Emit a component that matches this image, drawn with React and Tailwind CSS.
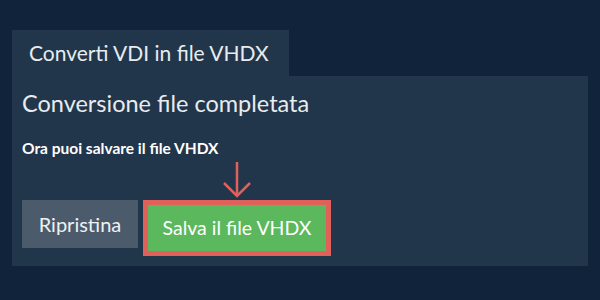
import React from "react";

export default function App() {
  return (
    <div className="w-[600px] h-[300px] bg-[#10233a] pt-[30px] px-[12px] font-['Lato',sans-serif] overflow-hidden">
      <div className="inline-flex items-center h-[46px] w-[277px] bg-[#22364b] pl-[17px] text-[21px] text-[#e8ecef]">
        Converti VDI in file VHDX
      </div>
      <div className="bg-[#22364b] h-[190px] px-[10px] pt-[12px]">
        <h1 className="text-[23.5px] leading-[30px] text-[#e8ecef]">Conversione file completata</h1>
        <p className="mt-[20px] text-[15.5px] font-bold leading-[20px] text-white">Ora puoi salvare il file VHDX</p>
        <div className="mt-[42px] flex items-start gap-[5px]">
          <button className="h-[48px] w-[116px] bg-[#4b5b6c] text-[20px] text-[#eef1f3]">Ripristina</button>
          <div className="relative">
            <svg className="absolute left-[80px] top-[-38px]" width="30" height="36" viewBox="0 0 30 36" fill="none" stroke="#e0605a" strokeWidth="2.5">
              <path d="M14 0 V34" />
              <path d="M1 21 L14 34 L27 21" />
            </svg>
            <button className="h-[56px] w-[188px] border-[5px] border-[#e0605a] bg-[#5cb85c] text-[19.5px] text-white">
              Salva il file VHDX
            </button>
          </div>
        </div>
      </div>
    </div>
  );
}
